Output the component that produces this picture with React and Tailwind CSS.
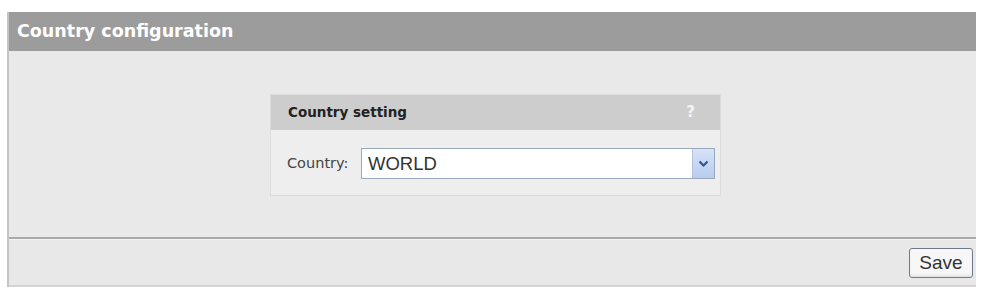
export default function App() {
  return (
    <div className="w-[981px] h-[287px] bg-white pt-[12px] pl-[7px] pr-[5px] font-['DejaVu_Sans',sans-serif]">
      <div className="border-l-2 border-[#c4c4c4] h-[275px] flex flex-col">
        <div className="h-[39px] bg-[#9c9c9c] flex items-center px-[8px] text-white font-bold text-[17.5px]">
          Country configuration
        </div>
        <div className="h-[186px] bg-[#e9e9e9] flex justify-center pt-[43px] pl-[6px]">
          <div className="w-[451px] h-[102px] bg-[#eeeeee] border border-[#dcdcdc] flex flex-col">
            <div className="h-[35px] bg-[#cdcdcd] flex items-center justify-between pl-[17px] pr-[25px]">
              <span className="text-[13.5px] font-bold text-[#222]">Country setting</span>
              <span className="text-[15px] font-bold text-[#f4f4f4]">?</span>
            </div>
            <div className="flex items-center pt-[18px] pl-[16px] gap-[9px]">
              <span className="text-[14.5px] text-[#444] w-[65px]">Country:</span>
              <div className="w-[354px] h-[31px] bg-white border border-[#9aa8bd] flex items-center justify-between">
                <span className="pl-[6px] text-[18.5px] text-[#333] font-['Liberation_Sans',sans-serif]">WORLD</span>
                <div className="w-[22px] h-[29px] bg-gradient-to-b from-[#d6e2f7] to-[#b9cdf0] border-l border-[#b3c3e0] flex items-center justify-center">
                  <svg width="11" height="8" viewBox="0 0 11 8">
                    <path d="M1.5 1.5 L5.5 5.5 L9.5 1.5" fill="none" stroke="#33548f" strokeWidth="2.2" />
                  </svg>
                </div>
              </div>
            </div>
          </div>
        </div>
        <div className="h-[3px] bg-[#a9a9a9] border-b border-[#f4f4f4]"></div>
        <div className="flex-1 bg-[#e8e8e8] border-b-2 border-[#d4d4d4] flex justify-end items-center pr-[3px]">
          <button className="w-[64px] h-[30px] bg-[#f7f7f7] border border-[#6e7b8e] rounded-[3px] text-[19px] text-[#333] font-['Liberation_Sans',sans-serif] shadow-[inset_0_-2px_2px_rgba(0,0,0,0.08)]">
            Save
          </button>
        </div>
      </div>
    </div>
  );
}
